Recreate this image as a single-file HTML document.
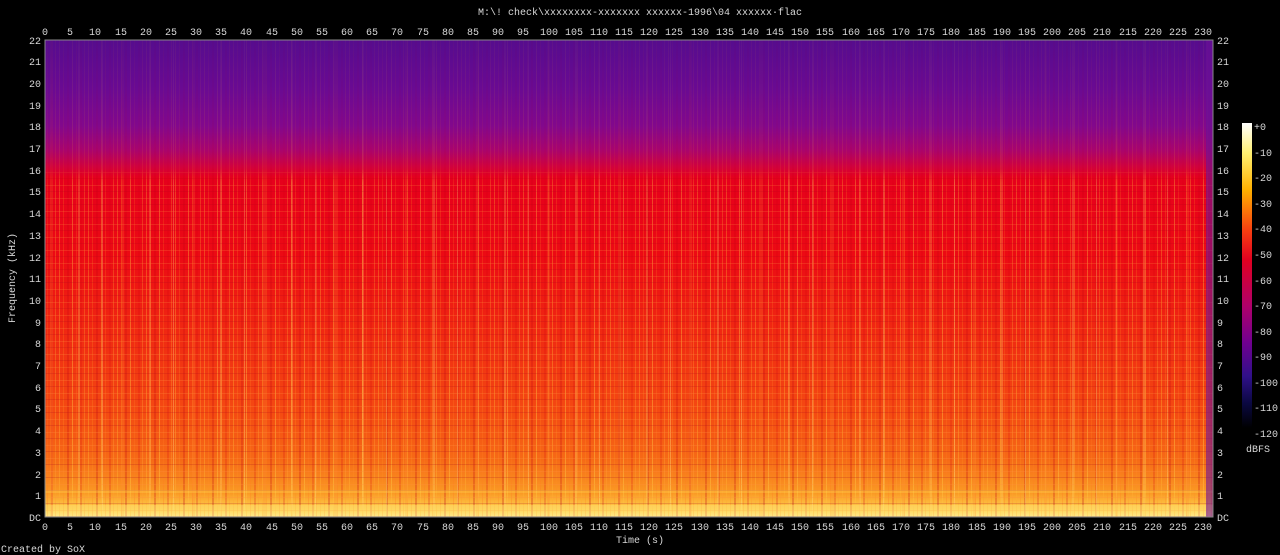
<!DOCTYPE html>
<html><head><meta charset="utf-8"><style>
html,body{margin:0;padding:0;background:#000;width:1280px;height:555px;overflow:hidden}
svg{display:block}
text{font-family:"Liberation Mono",monospace;font-size:10px;fill:#d8d8d8}
</style></head><body>
<svg width="1280" height="555" viewBox="0 0 1280 555" xmlns="http://www.w3.org/2000/svg">
<defs>
<linearGradient id="spec" x1="0" y1="0" x2="0" y2="1">
<stop offset="0" stop-color="#560c8e"/>
<stop offset="0.1" stop-color="#690a92"/>
<stop offset="0.18" stop-color="#82088c"/>
<stop offset="0.23" stop-color="#a8046e"/>
<stop offset="0.265" stop-color="#d0023e"/>
<stop offset="0.29" stop-color="#e6001c"/>
<stop offset="0.45" stop-color="#ec0a14"/>
<stop offset="0.62" stop-color="#f02a12"/>
<stop offset="0.78" stop-color="#f44a12"/>
<stop offset="0.88" stop-color="#f66a16"/>
<stop offset="0.95" stop-color="#fa9a24"/>
<stop offset="0.985" stop-color="#fed050"/>
<stop offset="1" stop-color="#fff0a0"/>
</linearGradient>
<linearGradient id="cbar" x1="0" y1="0" x2="0" y2="1">
<stop offset="0" stop-color="#ffffff"/>
<stop offset="0.1" stop-color="#fff070"/>
<stop offset="0.22" stop-color="#ffb000"/>
<stop offset="0.35" stop-color="#f84010"/>
<stop offset="0.45" stop-color="#e00020"/>
<stop offset="0.6" stop-color="#b0006a"/>
<stop offset="0.72" stop-color="#700090"/>
<stop offset="0.83" stop-color="#30108a"/>
<stop offset="0.92" stop-color="#0a0840"/>
<stop offset="1" stop-color="#000000"/>
</linearGradient>
<pattern id="stripes" width="29" height="10" patternUnits="userSpaceOnUse">
<rect x="1" width="1" height="10" fill="#ffb030" opacity="0.45"/>
<rect x="5" width="1" height="10" fill="#ff9020" opacity="0.3"/>
<rect x="9" width="2" height="10" fill="#c00010" opacity="0.25"/>
<rect x="14" width="1" height="10" fill="#ffc040" opacity="0.5"/>
<rect x="18" width="1" height="10" fill="#ff8020" opacity="0.3"/>
<rect x="22" width="2" height="10" fill="#d00010" opacity="0.2"/>
<rect x="26" width="1" height="10" fill="#ffa030" opacity="0.4"/>
</pattern>
<pattern id="stripes2" width="71" height="10" patternUnits="userSpaceOnUse">
<rect x="7" width="2" height="10" fill="#ffd060" opacity="0.35"/>
<rect x="31" width="1" height="10" fill="#ffe080" opacity="0.4"/>
<rect x="50" width="3" height="10" fill="#ff9030" opacity="0.25"/>
</pattern>
<pattern id="hbands" width="10" height="13" patternUnits="userSpaceOnUse">
<rect y="3" width="10" height="1" fill="#ff9040" opacity="0.3"/>
<rect y="9" width="10" height="1" fill="#a00020" opacity="0.2"/>
</pattern>
<linearGradient id="stripefade" x1="0" y1="0" x2="0" y2="1">
<stop offset="0" stop-color="#fff" stop-opacity="0.1"/>
<stop offset="0.27" stop-color="#fff" stop-opacity="0.25"/>
<stop offset="0.3" stop-color="#fff" stop-opacity="0.7"/>
<stop offset="1" stop-color="#fff" stop-opacity="1"/>
</linearGradient>
<mask id="m1"><rect x="45" y="40" width="1168" height="477" fill="url(#stripefade)"/></mask>
</defs>
<rect x="45" y="40" width="1168" height="477" fill="url(#spec)"/>
<g mask="url(#m1)">
<rect x="45" y="40" width="1168" height="477" fill="url(#stripes)"/>
<rect x="45" y="40" width="1168" height="477" fill="url(#stripes2)"/>
<rect x="45" y="170" width="1168" height="347" fill="url(#hbands)"/>
</g>
<rect x="45" y="490" width="1168" height="3" fill="#ffd050" opacity="0.35"/>
<rect x="45" y="505" width="1168" height="12" fill="#ffe070" opacity="0.45"/>
<rect x="1206" y="40" width="7" height="477" fill="#6a1098" opacity="0.6"/>
<rect x="45" y="40" width="1168" height="477" fill="none" stroke="#888" stroke-width="1"/>
<text x="640" y="15" text-anchor="middle">M:\! check\xxxxxxxx-xxxxxxx xxxxxx-1996\04 xxxxxx·flac</text>
<g text-anchor="middle">
<text x="45" y="35">0</text><text x="70" y="35">5</text><text x="95" y="35">10</text><text x="121" y="35">15</text><text x="146" y="35">20</text><text x="171" y="35">25</text><text x="196" y="35">30</text><text x="221" y="35">35</text><text x="246" y="35">40</text><text x="272" y="35">45</text><text x="297" y="35">50</text><text x="322" y="35">55</text><text x="347" y="35">60</text><text x="372" y="35">65</text><text x="397" y="35">70</text><text x="423" y="35">75</text><text x="448" y="35">80</text><text x="473" y="35">85</text><text x="498" y="35">90</text><text x="523" y="35">95</text><text x="549" y="35">100</text><text x="574" y="35">105</text><text x="599" y="35">110</text><text x="624" y="35">115</text><text x="649" y="35">120</text><text x="674" y="35">125</text><text x="700" y="35">130</text><text x="725" y="35">135</text><text x="750" y="35">140</text><text x="775" y="35">145</text><text x="800" y="35">150</text><text x="825" y="35">155</text><text x="851" y="35">160</text><text x="876" y="35">165</text><text x="901" y="35">170</text><text x="926" y="35">175</text><text x="951" y="35">180</text><text x="977" y="35">185</text><text x="1002" y="35">190</text><text x="1027" y="35">195</text><text x="1052" y="35">200</text><text x="1077" y="35">205</text><text x="1102" y="35">210</text><text x="1128" y="35">215</text><text x="1153" y="35">220</text><text x="1178" y="35">225</text><text x="1203" y="35">230</text>
</g>
<g text-anchor="middle">
<text x="45" y="530">0</text><text x="70" y="530">5</text><text x="95" y="530">10</text><text x="121" y="530">15</text><text x="146" y="530">20</text><text x="171" y="530">25</text><text x="196" y="530">30</text><text x="221" y="530">35</text><text x="246" y="530">40</text><text x="272" y="530">45</text><text x="297" y="530">50</text><text x="322" y="530">55</text><text x="347" y="530">60</text><text x="372" y="530">65</text><text x="397" y="530">70</text><text x="423" y="530">75</text><text x="448" y="530">80</text><text x="473" y="530">85</text><text x="498" y="530">90</text><text x="523" y="530">95</text><text x="549" y="530">100</text><text x="574" y="530">105</text><text x="599" y="530">110</text><text x="624" y="530">115</text><text x="649" y="530">120</text><text x="674" y="530">125</text><text x="700" y="530">130</text><text x="725" y="530">135</text><text x="750" y="530">140</text><text x="775" y="530">145</text><text x="800" y="530">150</text><text x="825" y="530">155</text><text x="851" y="530">160</text><text x="876" y="530">165</text><text x="901" y="530">170</text><text x="926" y="530">175</text><text x="951" y="530">180</text><text x="977" y="530">185</text><text x="1002" y="530">190</text><text x="1027" y="530">195</text><text x="1052" y="530">200</text><text x="1077" y="530">205</text><text x="1102" y="530">210</text><text x="1128" y="530">215</text><text x="1153" y="530">220</text><text x="1178" y="530">225</text><text x="1203" y="530">230</text>
</g>
<g text-anchor="end">
<text x="41" y="44">22</text><text x="41" y="65">21</text><text x="41" y="87">20</text><text x="41" y="109">19</text><text x="41" y="130">18</text><text x="41" y="152">17</text><text x="41" y="174">16</text><text x="41" y="195">15</text><text x="41" y="217">14</text><text x="41" y="239">13</text><text x="41" y="261">12</text><text x="41" y="282">11</text><text x="41" y="304">10</text><text x="41" y="326">9</text><text x="41" y="347">8</text><text x="41" y="369">7</text><text x="41" y="391">6</text><text x="41" y="412">5</text><text x="41" y="434">4</text><text x="41" y="456">3</text><text x="41" y="478">2</text><text x="41" y="499">1</text><text x="41" y="521">DC</text>
</g>
<g>
<text x="1217" y="44">22</text><text x="1217" y="65">21</text><text x="1217" y="87">20</text><text x="1217" y="109">19</text><text x="1217" y="130">18</text><text x="1217" y="152">17</text><text x="1217" y="174">16</text><text x="1217" y="195">15</text><text x="1217" y="217">14</text><text x="1217" y="239">13</text><text x="1217" y="261">12</text><text x="1217" y="282">11</text><text x="1217" y="304">10</text><text x="1217" y="326">9</text><text x="1217" y="347">8</text><text x="1217" y="369">7</text><text x="1217" y="391">6</text><text x="1217" y="412">5</text><text x="1217" y="434">4</text><text x="1217" y="456">3</text><text x="1217" y="478">2</text><text x="1217" y="499">1</text><text x="1217" y="521">DC</text>
</g>
<text x="640" y="543" text-anchor="middle">Time (s)</text>
<text transform="translate(15,278) rotate(-90)" text-anchor="middle">Frequency (kHz)</text>
<rect x="1242" y="123" width="10" height="305" fill="url(#cbar)"/>
<g>
<text x="1254" y="130">+0</text><text x="1254" y="156">-10</text><text x="1254" y="181">-20</text><text x="1254" y="207">-30</text><text x="1254" y="232">-40</text><text x="1254" y="258">-50</text><text x="1254" y="284">-60</text><text x="1254" y="309">-70</text><text x="1254" y="335">-80</text><text x="1254" y="360">-90</text><text x="1254" y="386">-100</text><text x="1254" y="411">-110</text><text x="1254" y="437">-120</text>
</g>
<text x="1246" y="452">dBFS</text>
<text x="1" y="552">Created by SoX</text>
</svg>
</body></html>
